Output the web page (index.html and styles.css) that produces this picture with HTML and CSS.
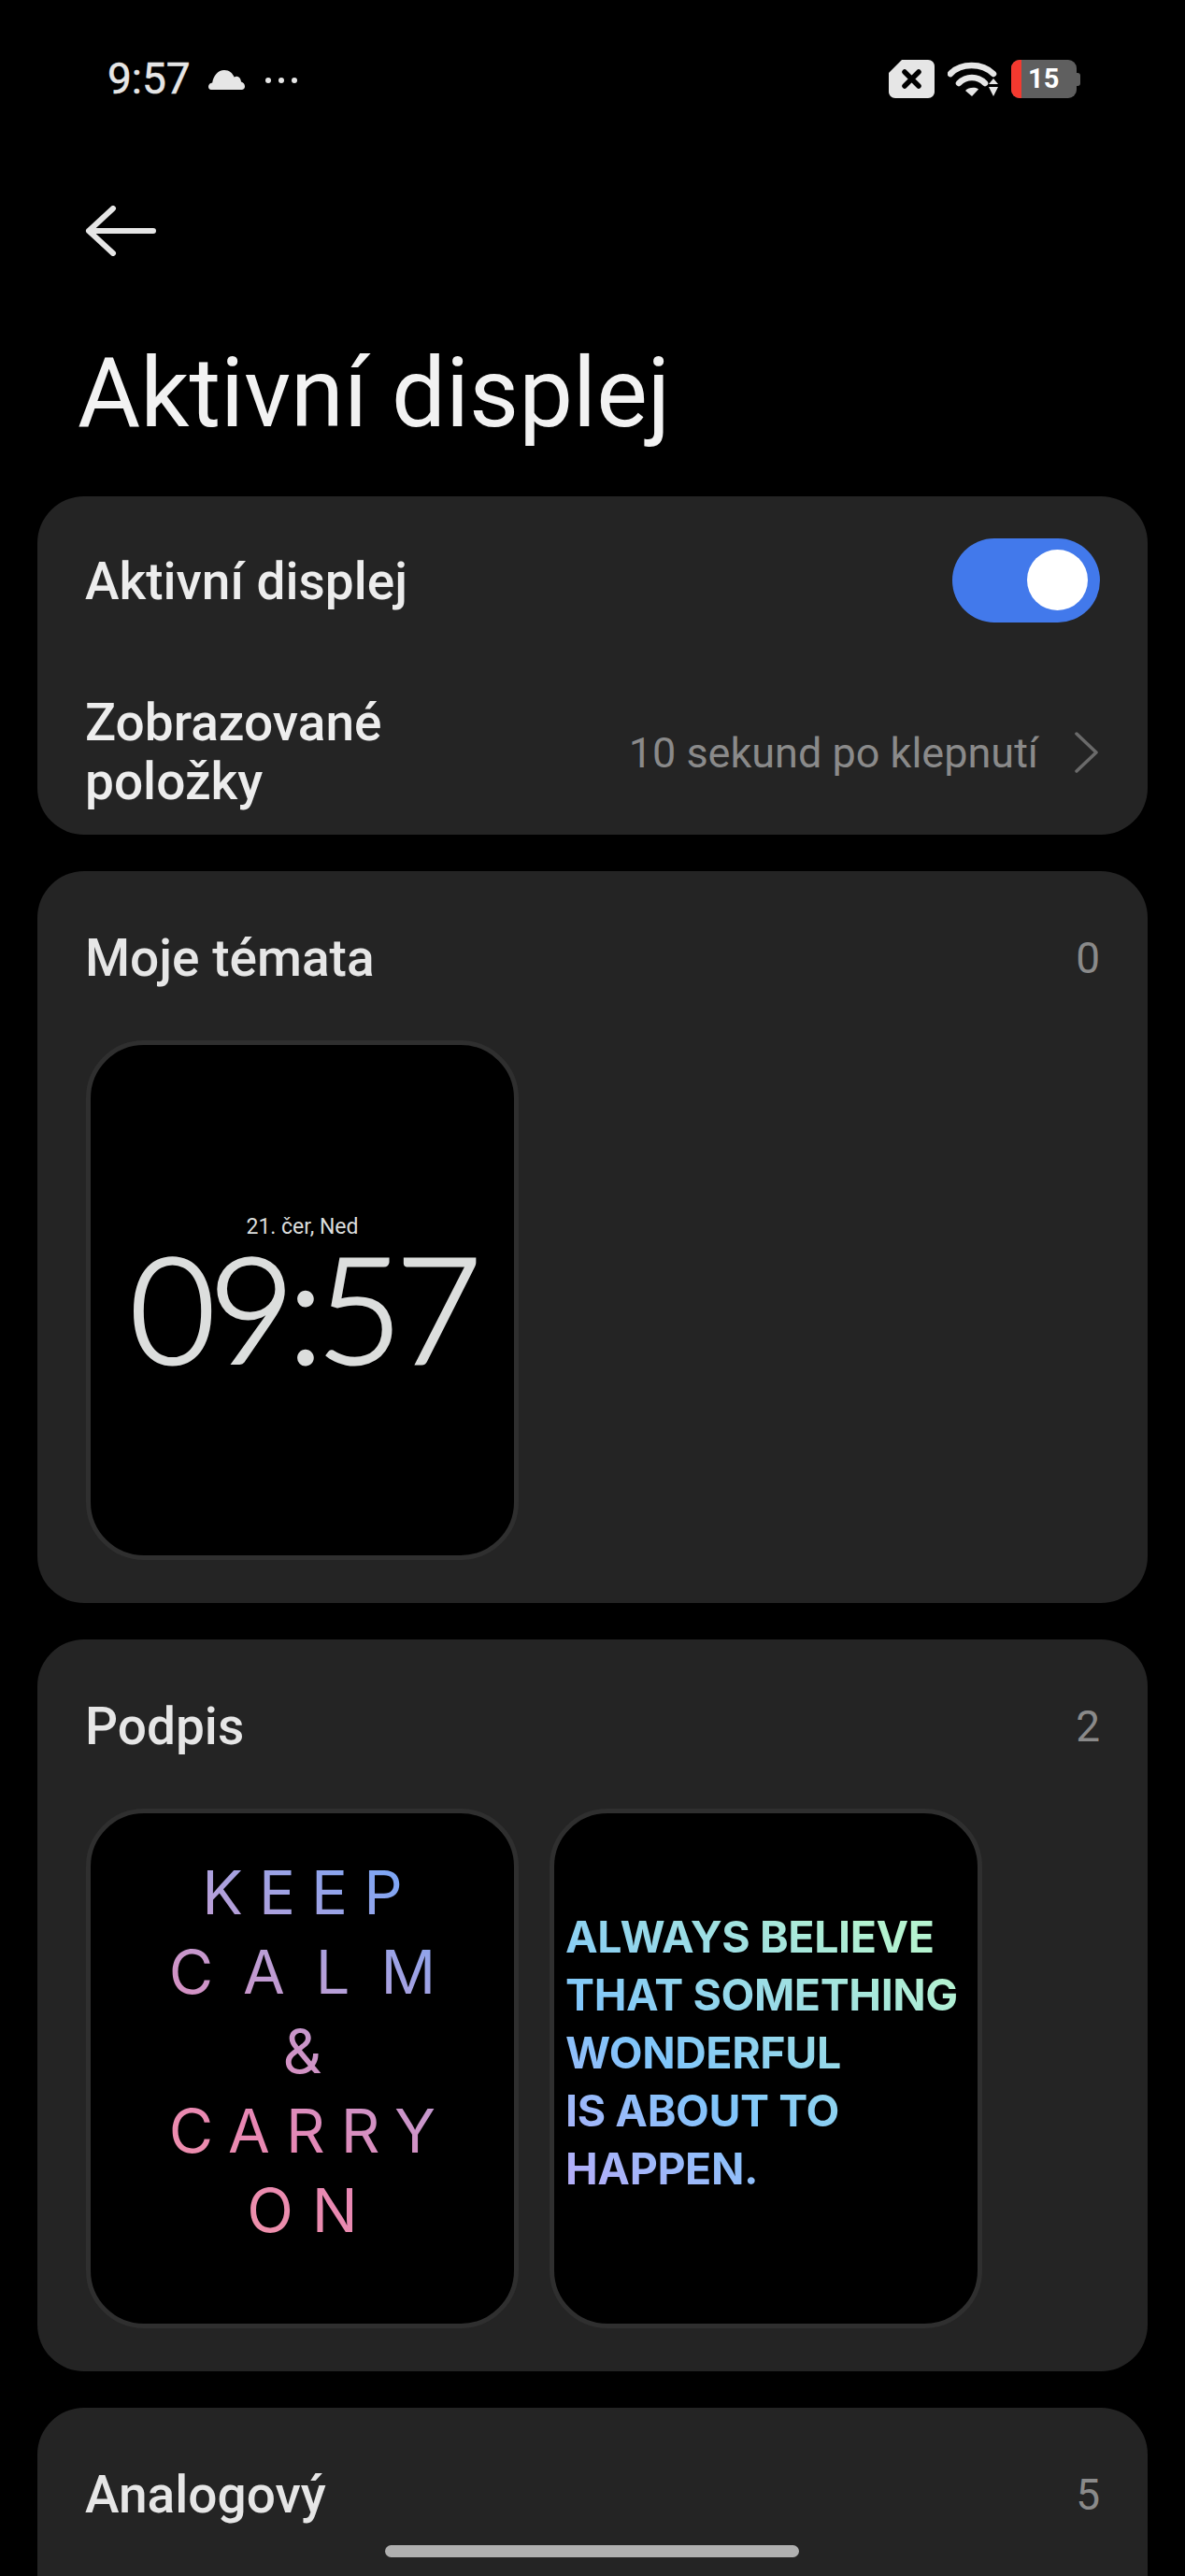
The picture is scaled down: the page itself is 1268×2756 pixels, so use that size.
FILE: index.html
```html
<!DOCTYPE html>
<html>
<head>
  <title>Aktivní displej</title>
  <link rel="stylesheet" href="styles.css">
</head>
<body>
  <div class="status-bar">
    <div class="status-left">
      <span class="status-time">9:57</span>
      <svg class="icon-cloud" width="39" height="21" viewBox="0 0 39 21"><path d="M3 21C1 21 0 19.6 0 17.8 0 15.4 1.8 13.6 4.2 13.4 5.4 6 10.2 0 17 0 22.4 0 26 3.4 27.6 7.6 29 6.8 30.2 6.6 31.4 7 33.6 7.6 34.8 9.8 35 12.6 37.4 13.2 39 15 39 17.6 39 19.6 37.6 21 35.6 21Z" fill="#e6e6e6"/></svg>
      <span class="status-dots"><i></i><i></i><i></i></span>
    </div>
    <div class="status-right">
      <svg class="icon-sim" width="49" height="41" viewBox="0 0 49 41"><path d="M14 0H42C46 0 49 3 49 7V34C49 38 46 41 42 41H7C3 41 0 38 0 34V14Z" fill="#e6e6e6"/><path d="M17 13L32 28M32 13L17 28" stroke="#000" stroke-width="5.5" stroke-linecap="round"/></svg>
      <svg class="icon-wifi" width="54" height="37" viewBox="0 0 54 37"><path d="M3 13C14 1 37 1 49 13" fill="none" stroke="#e6e6e6" stroke-width="6.5" stroke-linecap="round"/><path d="M12 23C20 15 32 15 40 23" fill="none" stroke="#e6e6e6" stroke-width="6.5" stroke-linecap="round"/><path d="M19 31C22 27 31 27 33 29.500L26 37Z" fill="#e6e6e6"/><path d="M44 24L49 18 54 24Z M44 27L49 37 54 27Z" fill="#e6e6e6"/></svg>
      <div class="battery">
        <div class="battery-low"></div>
        <span class="battery-num">15</span>
      </div>
    </div>
  </div>

  <div class="top-nav">
    <svg class="icon-back" width="76" height="54" viewBox="0 0 76 54"><path d="M4 27H73M30 3L4 27 30 51" fill="none" stroke="#e6e6e6" stroke-width="6" stroke-linecap="round" stroke-linejoin="round"/></svg>
  </div>

  <h1 class="page-title">Aktivní displej</h1>

  <div class="card card-settings">
    <div class="row row-switch">
      <span class="row-label">Aktivní displej</span>
      <div class="switch"><div class="switch-knob"></div></div>
    </div>
    <div class="row row-items">
      <span class="row-label row-label-wrap">Zobrazované položky</span>
      <div class="row-value">
        <span>10 sekund po klepnutí</span>
        <svg class="icon-chevron" width="25" height="44" viewBox="0 0 25 44"><path d="M2 2L23 22 2 42" fill="none" stroke="#6a6a6a" stroke-width="3.500" stroke-linecap="round" stroke-linejoin="round"/></svg>
      </div>
    </div>
  </div>

  <div class="card">
    <div class="section-head">
      <span class="section-name">Moje témata</span>
      <span class="section-count">0</span>
    </div>
    <div class="thumbs">
      <div class="thumb thumb-clock">
        <div class="clock-date">21. čer, Ned</div>
        <div class="clock-time">09:57</div>
      </div>
    </div>
  </div>

  <div class="card">
    <div class="section-head">
      <span class="section-name">Podpis</span>
      <span class="section-count">2</span>
    </div>
    <div class="thumbs">
      <div class="thumb thumb-keep">
        <div class="keep-text">
          <span class="keep-line keep-1">KEEP</span>
          <span class="keep-line keep-2">CALM</span>
          <span class="keep-line">&amp;</span>
          <span class="keep-line keep-4">CARRY</span>
          <span class="keep-line keep-5">ON</span>
        </div>
      </div>
      <div class="thumb thumb-always">
        <div class="always-text">ALWAYS BELIEVE<br>THAT SOMETHING<br>WONDERFUL<br>IS ABOUT TO<br>HAPPEN.</div>
      </div>
    </div>
  </div>

  <div class="card card-last">
    <div class="section-head">
      <span class="section-name">Analogový</span>
      <span class="section-count">5</span>
    </div>
  </div>

  <div class="home-bar"></div>
</body>
</html>
```

FILE: styles.css
```css
html, body {
  height: 2756px;
  overflow: hidden;
}

body {
  font-family: Roboto, "Noto Sans", sans-serif;
  background-color: #000;
  color: #e6e6e6;
  margin: 0;
  position: relative;
}

.status-bar {
  display: flex;
  justify-content: space-between;
  align-items: center;
  height: 41px;
  padding: 64px 116px 0 115px;
}

.status-left {
  display: flex;
  align-items: center;
}

.status-time {
  font-size: 46px;
  line-height: 41px;
  width: 108px;
  -webkit-text-stroke: 0.5px #e6e6e6;
}

.icon-cloud {
  margin-top: 1px;
}

.status-dots {
  display: flex;
  gap: 8px;
  margin-left: 22px;
  margin-top: 2px;
}

.status-dots i {
  width: 6px;
  height: 6px;
  border-radius: 50%;
  background-color: #e6e6e6;
}

.status-right {
  display: flex;
  align-items: center;
  gap: 14px;
}

.battery {
  position: relative;
  width: 70px;
  height: 41px;
  background-color: #5f5f5f;
  border-radius: 9px;
}

.battery::after {
  content: "";
  position: absolute;
  left: 70px;
  top: 14px;
  width: 4px;
  height: 14px;
  background-color: #5f5f5f;
  border-radius: 0 3px 3px 0;
}

.battery-low {
  position: absolute;
  left: 0;
  top: 0;
  width: 11px;
  height: 41px;
  background-color: #f4392f;
  border-radius: 9px 0 0 9px;
}

.battery-num {
  position: absolute;
  left: 18px;
  top: 0;
  font-size: 29px;
  font-weight: 700;
  line-height: 41px;
  color: #fff;
}

.top-nav {
  padding: 115px 0 0 91px;
  height: 54px;
}

.icon-back {
  display: block;
}

.page-title {
  font-size: 103px;
  font-weight: 400;
  line-height: 120px;
  margin: 87px 0 0 83px;
  color: #f2f2f2;
}

.card {
  background-color: #242424;
  border-radius: 50px;
  margin: 0 40px 39px;
  padding: 0 51px 0 52px;
}

.card-settings {
  margin-top: 50px;
  height: 362px;
}

.card-last {
  height: 180px;
  margin-bottom: 0;
  border-radius: 50px 50px 0 0;
}

.row {
  display: flex;
  justify-content: space-between;
  align-items: center;
}

.row-switch {
  height: 90px;
  padding-top: 45px;
}

.row-items {
  margin-top: 76px;
  height: 126px;
}

.row-label {
  font-size: 55px;
  font-weight: 500;
  line-height: 63px;
  color: #ededed;
  margin-left: -1px;
}

.row-switch .row-label {
  margin-top: 3px;
}

.row-label-wrap {
  width: 340px;
}

.row-value {
  display: flex;
  align-items: center;
  gap: 39px;
  font-size: 45px;
  color: #8a8a8a;
  margin-right: 2px;
}

.switch {
  position: relative;
  width: 158px;
  height: 90px;
  background-color: #4279eb;
  border-radius: 45px;
}

.switch-knob {
  position: absolute;
  right: 13px;
  top: 12px;
  width: 65px;
  height: 65px;
  border-radius: 50%;
  background-color: #fff;
}

.section-head {
  display: flex;
  justify-content: space-between;
  align-items: center;
  height: 60px;
  padding-top: 63px;
}

.section-name {
  font-size: 55px;
  font-weight: 500;
  color: #e6e6e6;
  margin-left: -1px;
}

.section-count {
  font-size: 46px;
  color: #8a8a8a;
}

.thumbs {
  display: flex;
  gap: 33px;
  margin-top: 58px;
  height: 556px;
  padding-bottom: 46px;
}

.thumb {
  box-sizing: border-box;
  width: 463px;
  height: 556px;
  background-color: #000;
  border: 5px solid #2f2f2f;
  border-radius: 62px;
  text-align: center;
}

.thumb-clock {
  padding-top: 180px;
  color: #dcdedd;
}

.clock-date {
  font-size: 23px;
  line-height: 30px;
}

.clock-time {
  font-family: Lato, sans-serif;
  font-weight: 300;
  font-size: 158px;
  line-height: 130px;
  letter-spacing: -7px;
  margin-top: 5px;
  -webkit-text-stroke: 3px #dcdedd;
}

.keep-text {
  font-family: Inter, sans-serif;
  font-weight: 400;
  font-size: 65px;
  line-height: 85px;
  margin-top: 42px;
  background-image: linear-gradient(35deg, #f59aa0 0%, #e887b4 35%, #b79fd8 62%, #7da6f5 85%);
  -webkit-background-clip: text;
  background-clip: text;
  color: transparent;
}

.keep-line {
  display: block;
}

.keep-1 {
  letter-spacing: 17px;
  margin-right: -17px;
}

.keep-2 {
  letter-spacing: 33px;
  margin-right: -33px;
}

.keep-4 {
  letter-spacing: 17px;
  margin-right: -17px;
}

.keep-5 {
  letter-spacing: 20px;
  margin-right: -20px;
}

.always-text {
  font-family: Inter, sans-serif;
  font-weight: 700;
  font-size: 46.5px;
  letter-spacing: -0.4px;
  line-height: 62px;
  text-align: left;
  margin: 101px 0 0 12px;
  white-space: nowrap;
  background-image: linear-gradient(35deg, #b2aef8 5%, #80c6fb 35%, #b5f3d0 85%);
  -webkit-background-clip: text;
  background-clip: text;
  color: transparent;
}

.home-bar {
  position: absolute;
  left: 412px;
  top: 2723px;
  width: 443px;
  height: 13px;
  border-radius: 7px;
  background-color: #b0b0b0;
}
```
